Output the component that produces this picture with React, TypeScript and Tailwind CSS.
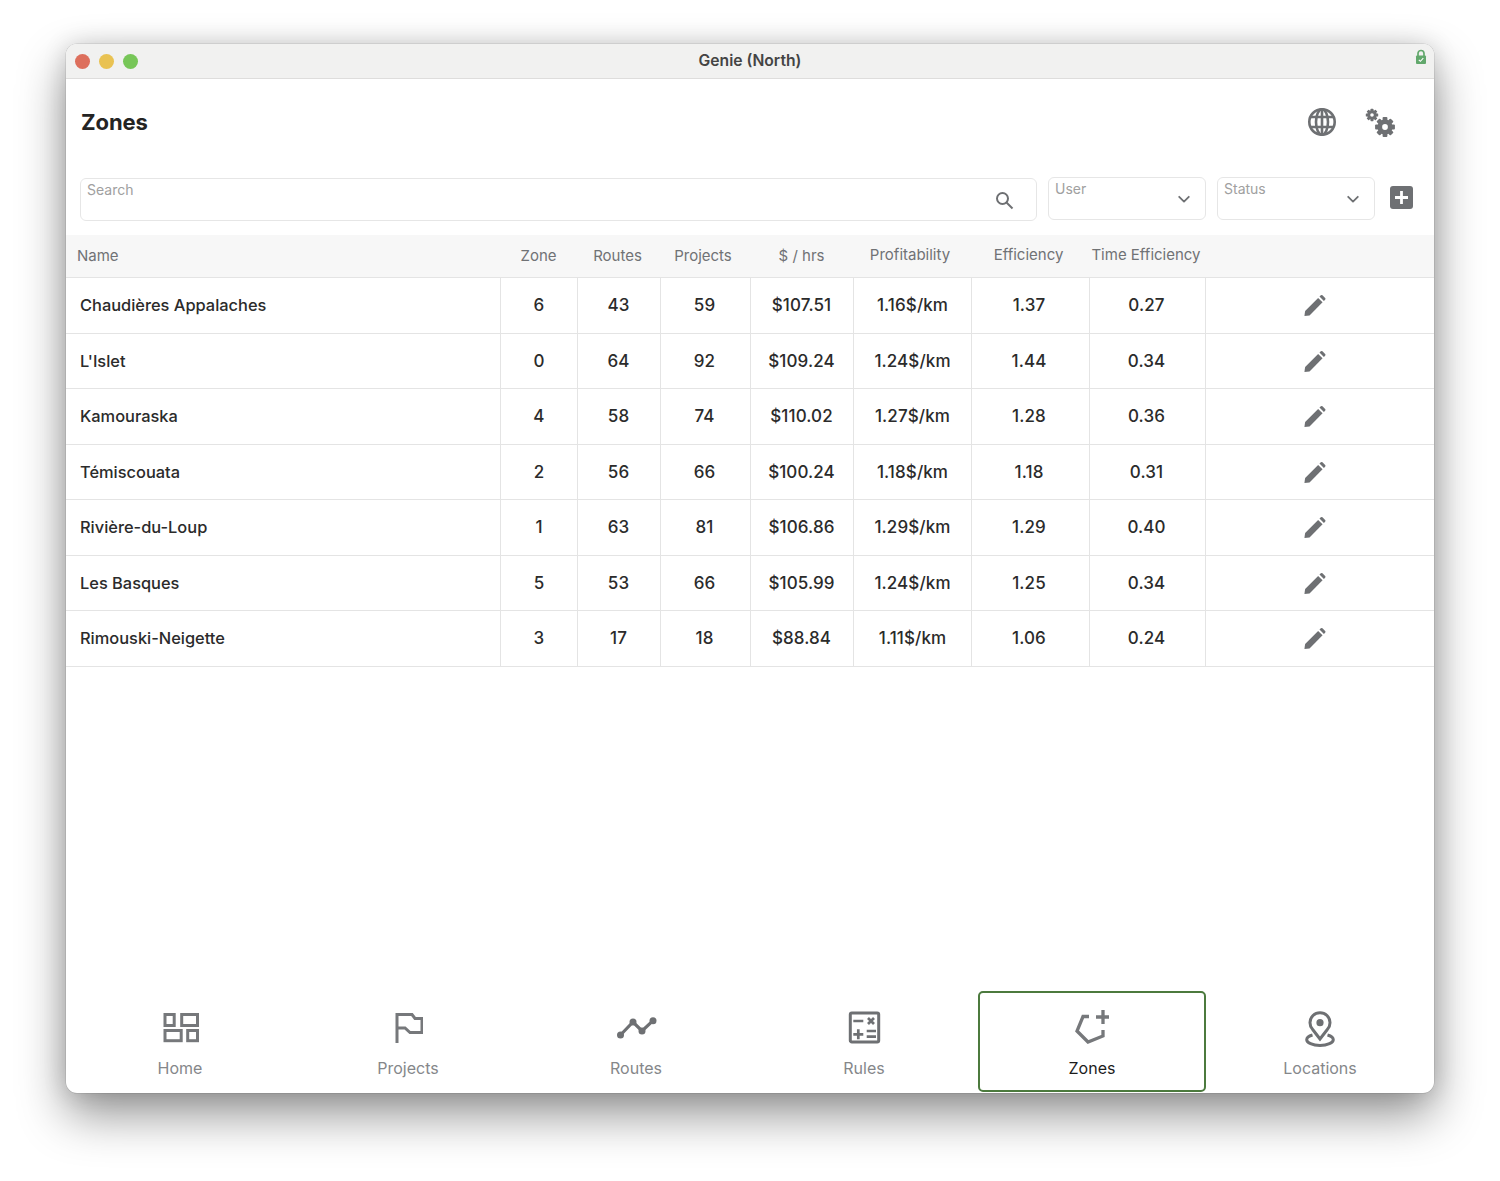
import React from "react";

const rows = [
  ["Chaudières Appalaches", "6", "43", "59", "$107.51", "1.16$/km", "1.37", "0.27"],
  ["L'Islet", "0", "64", "92", "$109.24", "1.24$/km", "1.44", "0.34"],
  ["Kamouraska", "4", "58", "74", "$110.02", "1.27$/km", "1.28", "0.36"],
  ["Témiscouata", "2", "56", "66", "$100.24", "1.18$/km", "1.18", "0.31"],
  ["Rivière-du-Loup", "1", "63", "81", "$106.86", "1.29$/km", "1.29", "0.40"],
  ["Les Basques", "5", "53", "66", "$105.99", "1.24$/km", "1.25", "0.34"],
  ["Rimouski-Neigette", "3", "17", "18", "$88.84", "1.11$/km", "1.06", "0.24"],
];

const headers = ["Zone", "Routes", "Projects", "$ / hrs", "Profitability", "Efficiency", "Time Efficiency"];
const gridCols = "grid grid-cols-[435px_77px_83px_90px_103px_118px_118px_116px_228px]";
const cellPad = ["", "pr-[1px]", "pr-[2px]", "pr-[1px]", "", "pr-[3px]", "pr-[2px]"];
const headPad = ["pr-[2px]", "pr-[4px]", "pr-[6px]", "pr-[2px]", "pr-[6px]", "pr-[5px]", "pr-[4px]"];

const Pencil = () => (
  <svg width="23" height="24" viewBox="0 0 24 24" fill="#6e7073" className="mt-[2px]">
    <path d="M1.500 22.500 2.200 17.200 15.800 3.600 20.400 8.200 6.800 21.800Z" />
    <path d="M17.200 2.200 18.600 0.900a1.200 1.200 0 0 1 1.700 0l2.800 2.800a1.200 1.200 0 0 1 0 1.700L21.800 6.800Z" />
  </svg>
);

const Chevron = () => (
  <svg width="14" height="14" viewBox="0 0 14 14" fill="none" stroke="#6e7073" strokeWidth="1.800" strokeLinecap="round" strokeLinejoin="round">
    <path d="M2.200 4.800 7 9.600l4.800-4.800" />
  </svg>
);

const Gear = ({ x, y, s }: { x: number; y: number; s: number }) => (
  <g transform={`translate(${x} ${y}) scale(${s})`}>
    <g fill="#6e7073">
      {[0, 45, 90, 135].map((a) => (
        <rect key={a} x="-1.500" y="-6.200" width="3" height="12.400" rx="0.600" transform={`rotate(${a})`} />
      ))}
    </g>
    <circle r="4.700" fill="#6e7073" />
    <circle r="1.800" fill="#fff" />
  </g>
);

const icons: Record<string, React.ReactNode> = {
  Home: (
    <svg width="38" height="32" viewBox="0 0 38 32" fill="none" stroke="#76787b" strokeWidth="3" className="ml-[1px]">
      <rect x="3" y="2.500" width="9.200" height="11" />
      <rect x="19.700" y="2.500" width="15.800" height="11" />
      <rect x="3" y="18.500" width="16.200" height="10.200" />
      <rect x="25.700" y="18.500" width="9.800" height="10.200" />
    </svg>
  ),
  Projects: (
    <svg width="30" height="32" viewBox="0 0 30 32" fill="none" stroke="#76787b" strokeWidth="3" className="-ml-[1px]">
      <path d="M4 31V2.500h15l3 4h7v14H17l-5-4.500H4" />
    </svg>
  ),
  Routes: (
    <svg width="42" height="32" viewBox="0 0 42 32" fill="none" stroke="#6e7073" strokeWidth="3.200" className="ml-[1px]">
      <path d="M4.500 23 17 10l9 9 11-10.300" />
      <g fill="#6e7073" stroke="none">
        <circle cx="4.500" cy="23" r="3.500" />
        <circle cx="17" cy="10" r="3.500" />
        <circle cx="26" cy="19" r="3.500" />
        <circle cx="37" cy="8.700" r="3.500" />
      </g>
    </svg>
  ),
  Rules: (
    <svg width="34" height="34" viewBox="0 0 34 34" fill="none" stroke="#6e7073" strokeWidth="2.700">
      <rect x="3.300" y="2" width="28.400" height="29" rx="1.500" strokeWidth="3" />
      <path d="M6.300 10h10M21 7l6 6M27 7l-6 6M6.300 23.300h10M11.300 18.300v10M19.700 20H29M19.700 25.700H29" />
    </svg>
  ),
  Zones: (
    <svg width="36" height="36" viewBox="0 0 36 36" fill="none" stroke="#76787b" strokeWidth="3.300">
      <path d="M15 6.500H9L3 21l11 11 15-6v-6" />
      <path d="M29 0v14M22 7h13" />
    </svg>
  ),
  Locations: (
    <svg width="30" height="38" viewBox="0 0 30 38" fill="none" stroke="#6e7073" strokeWidth="3">
      <path d="M15 30 7.700 20.500a10 10 0 1 1 14.600 0Z" />
      <circle cx="15" cy="13.700" r="3.600" fill="#6e7073" stroke="none" />
      <path d="M7.500 26c-3.500 1-5.800 2.500-5.800 4.700 0 3 5.800 5.800 13.300 5.800s13.300-2.800 13.300-5.800c0-2.200-2.300-3.700-5.800-4.700" />
    </svg>
  ),
};

const tabs = ["Home", "Projects", "Routes", "Rules", "Zones", "Locations"];

export default function App() {
  return (
    <div className="w-[1500px] h-[1181px] bg-white pt-[44px] pl-[66px] font-['Inter','Noto_Sans',sans-serif] overflow-hidden">
      <div className="w-[1368px] h-[1049px] rounded-[11px] bg-white flex flex-col overflow-hidden shadow-[0_0_0_0.5px_rgba(0,0,0,0.14),0_22px_48px_rgba(0,0,0,0.42),0_0_24px_rgba(0,0,0,0.14)]">
        <div className="relative h-[35px] shrink-0 bg-[#f1f1f0] border-b border-[#dedddc] flex items-center justify-center">
          <div className="absolute left-[9px] top-[10px] flex gap-[9px]">
            <div className="w-[15px] h-[15px] rounded-full bg-[#dd6f5c]" />
            <div className="w-[15px] h-[15px] rounded-full bg-[#e9c252]" />
            <div className="w-[15px] h-[15px] rounded-full bg-[#77c658]" />
          </div>
          <span className="text-[15.700px] font-semibold text-[#444444]">Genie (North)</span>
          <svg className="absolute right-[7px] top-[5px]" width="12" height="16" viewBox="0 0 12 16">
            <path d="M3 7V4.500a3 3 0 0 1 6 0V7" fill="none" stroke="#62a86c" strokeWidth="1.700" />
            <rect x="1" y="6.500" width="10" height="8.500" rx="1" fill="#62a86c" />
            <path d="M3.800 10.800 5.400 12.300 8.300 9.200" fill="none" stroke="#fff" strokeWidth="1.100" />
          </svg>
        </div>

        <div className="h-[98px] shrink-0 flex items-start justify-between pl-[15px]">
          <h1 className="mt-[28px] text-[22px] leading-[30px] font-bold text-[#242424] tracking-[-0.1px]">Zones</h1>
          <div className="flex items-start">
            <svg className="mt-[28px]" width="30" height="30" viewBox="0 0 30 30" fill="none" stroke="#6e7073" strokeWidth="2.600">
              <circle cx="15" cy="15" r="12.700" />
              <ellipse cx="15" cy="15" rx="6" ry="12.700" />
              <path d="M15 2v26M3.800 10h22.400M3.800 20h22.400" />
            </svg>
            <svg className="ml-[27px] mr-[38px] mt-[28px]" width="32" height="32" viewBox="0 0 32 32">
              <Gear x={8} y={8} s={1} />
              <Gear x={21} y={20} s={1.600} />
            </svg>
          </div>
        </div>

        <div className="h-[58px] shrink-0 flex items-start pl-[14px]">
          <div className="relative mt-[1px] w-[956.500px] h-[43px] rounded-[6px] border border-[#e6e6e6] pl-[6px] pt-[2px] text-[14px] leading-[18px] text-[#a0a0a0]">
            Search
            <svg className="absolute right-[22px] top-[12px]" width="19" height="19" viewBox="0 0 19 19" fill="none" stroke="#6e7073" strokeWidth="2">
              <circle cx="7.500" cy="7.500" r="5.500" />
              <path d="m11.500 11.500 6 6" />
            </svg>
          </div>
          <div className="relative ml-[11.500px] w-[157.500px] h-[43px] rounded-[6px] border border-[#e6e6e6] pl-[6px] pt-[2px] text-[14px] leading-[18px] text-[#a0a0a0]">
            User
            <span className="absolute right-[13.500px] top-[14px]"><Chevron /></span>
          </div>
          <div className="relative ml-[11.500px] w-[157.500px] h-[43px] rounded-[6px] border border-[#e6e6e6] pl-[6px] pt-[2px] text-[14px] leading-[18px] text-[#a0a0a0]">
            Status
            <span className="absolute right-[13.500px] top-[14px]"><Chevron /></span>
          </div>
          <svg className="ml-[15.500px] mt-[9px]" width="23" height="23" viewBox="0 0 23 23">
            <rect width="23" height="23" rx="3" fill="#6e7073" />
            <path d="M11.500 5v13M5 11.500h13" stroke="#fff" strokeWidth="2.800" />
          </svg>
        </div>

        <div className={`${gridCols} h-[43px] shrink-0 bg-[#f7f7f7] border-b border-[#e4e4e4] text-[15px] text-[#707275] items-center`}>
          <div className="pl-[11px]">Name</div>
          {headers.map((h, i) => (
            <div key={h} className={`text-center whitespace-nowrap ${i < 4 ? "" : "-mt-[2px]"} ${headPad[i]}`}>
              {h}
            </div>
          ))}
          <div />
        </div>

        <div className="shrink-0">
          {rows.map((r) => (
            <div key={r[0]} className={`${gridCols} h-[55.500px] border-b border-[#e4e4e4] font-medium text-[#2b2b2b]`}>
              <div className="flex items-center pl-[14px] pt-[1px] border-r border-[#e4e4e4] text-[16.400px]">{r[0]}</div>
              {r.slice(1).map((c, i) => (
                <div key={i} className={`flex items-center justify-center pt-[1px] border-r border-[#e4e4e4] text-[17px] tracking-[0.1px] ${cellPad[i]}`}>{c}</div>
              ))}
              <div className="flex items-center justify-center pr-[11px]"><Pencil /></div>
            </div>
          ))}
        </div>

        <div className="flex-1" />

        <div className="h-[102px] shrink-0 grid grid-cols-[228px_228px_228px_228px_228px_228px] pb-[1px]">
          {tabs.map((t) => {
            const active = t === "Zones";
            return (
              <div
                key={t}
                className={`relative flex flex-col items-center ${active ? "rounded-[5px] border-2 border-[#4c7a3e] text-[#1c1c1c]" : "text-[#85878a]"}`}
              >
                <div className={`${active ? "mt-[17px]" : "mt-[19px]"} h-[36px] flex items-center justify-center`}>{icons[t]}</div>
                <div className="mt-[11px] text-[16px] leading-[22px]">{t}</div>
              </div>
            );
          })}
        </div>
      </div>
    </div>
  );
}
